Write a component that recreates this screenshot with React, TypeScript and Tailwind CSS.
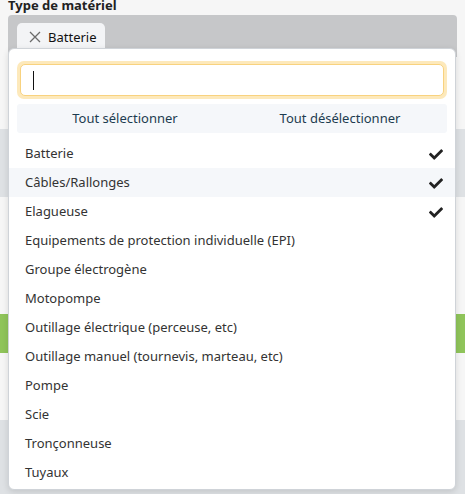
import React from "react";

const items = [
  "Batterie",
  "Câbles/Rallonges",
  "Elagueuse",
  "Equipements de protection individuelle (EPI)",
  "Groupe électrogène",
  "Motopompe",
  "Outillage électrique (perceuse, etc)",
  "Outillage manuel (tournevis, marteau, etc)",
  "Pompe",
  "Scie",
  "Tronçonneuse",
  "Tuyaux",
];
const checked = new Set([0, 1, 2]);

function Check() {
  return (
    <svg width="14" height="12" viewBox="0 0 512 420" aria-hidden="true">
      <path
        fill="#222"
        d="M173.9 409.4 7.5 243c-10-10-10-26.2 0-36.2l36.2-36.2c10-10 26.2-10 36.2 0L192 282.7 432.1 42.6c10-10 26.2-10 36.2 0l36.2 36.2c10 10 10 26.2 0 36.2L210.1 409.4c-10 10-26.2 10-36.2 0z"
      />
    </svg>
  );
}

export default function App() {
  return (
    <div
      className="relative w-[465px] h-[494px] overflow-hidden bg-[#f4f4f4] text-[13px] text-[#333]"
      style={{ fontFamily: "'Noto Sans', 'Open Sans', sans-serif" }}
    >
      <div className="flex flex-col">
        <div className="h-[129px] bg-[#f6f6f6] px-2">
          <div className="mt-[-4px] h-[19px] font-bold text-[13px] leading-[18px] text-[#222]">
            Type de matériel
          </div>
          <div className="h-[42px] rounded-t-[4px] bg-[#c6c7c9] pt-2 pl-[9px]">
            <div className="flex h-[34px] w-[88px] items-start gap-[7px] rounded-t-[5px] bg-[#f3f4f6] pl-3 pt-[8px]">
              <svg width="12" height="12" viewBox="0 0 12 12" aria-hidden="true">
                <path d="M1 1 11 11M11 1 1 11" stroke="#6b6b6b" strokeWidth="1.3" />
              </svg>
              <span className="leading-[13px] text-[#111]">Batterie</span>
            </div>
          </div>
        </div>
        <div className="h-[68px] bg-[#dee1e4]" />
        <div className="h-[117px] bg-[#f6f6f6]" />
        <div className="h-[39px] bg-[#8fc45a]" />
        <div className="h-[67px] bg-[#f6f6f6]" />
        <div className="h-[74px] bg-[#dee1e4]" />
      </div>

      <div className="absolute left-[8px] top-[48px] w-[448px] h-[442px] rounded-[6px] border border-[#cfd3d8] bg-white shadow-[0_2px_6px_rgba(0,0,0,0.12)]">
        <div className="px-2 pt-3">
          <div className="h-[38px] rounded-[7px] bg-[#fde9bb] p-[3px]">
            <div className="flex h-full items-center rounded-[5px] border border-[#f8d27f] bg-white pl-[12px]">
              <div className="h-[19px] w-[1px] bg-[#111]" />
            </div>
          </div>
          <div className="mt-[5px] flex h-[29px] items-center rounded-[3px] bg-[#f5f7fa] text-[#1d3c50]">
            <div className="flex-1 text-center pl-[1px]">Tout sélectionner</div>
            <div className="flex-1 text-center pl-[1px]">Tout désélectionner</div>
          </div>
        </div>
        <div className="mt-[6px] flex flex-col">
          {items.map((it, i) => (
            <div
              key={it}
              className={
                "flex h-[29px] items-center justify-between pl-[16px] pr-[12px] " +
                (i === 1 ? "bg-[#f5f7fa]" : "")
              }
            >
              <span>{it}</span>
              {checked.has(i) ? <Check /> : null}
            </div>
          ))}
        </div>
      </div>
    </div>
  );
}
